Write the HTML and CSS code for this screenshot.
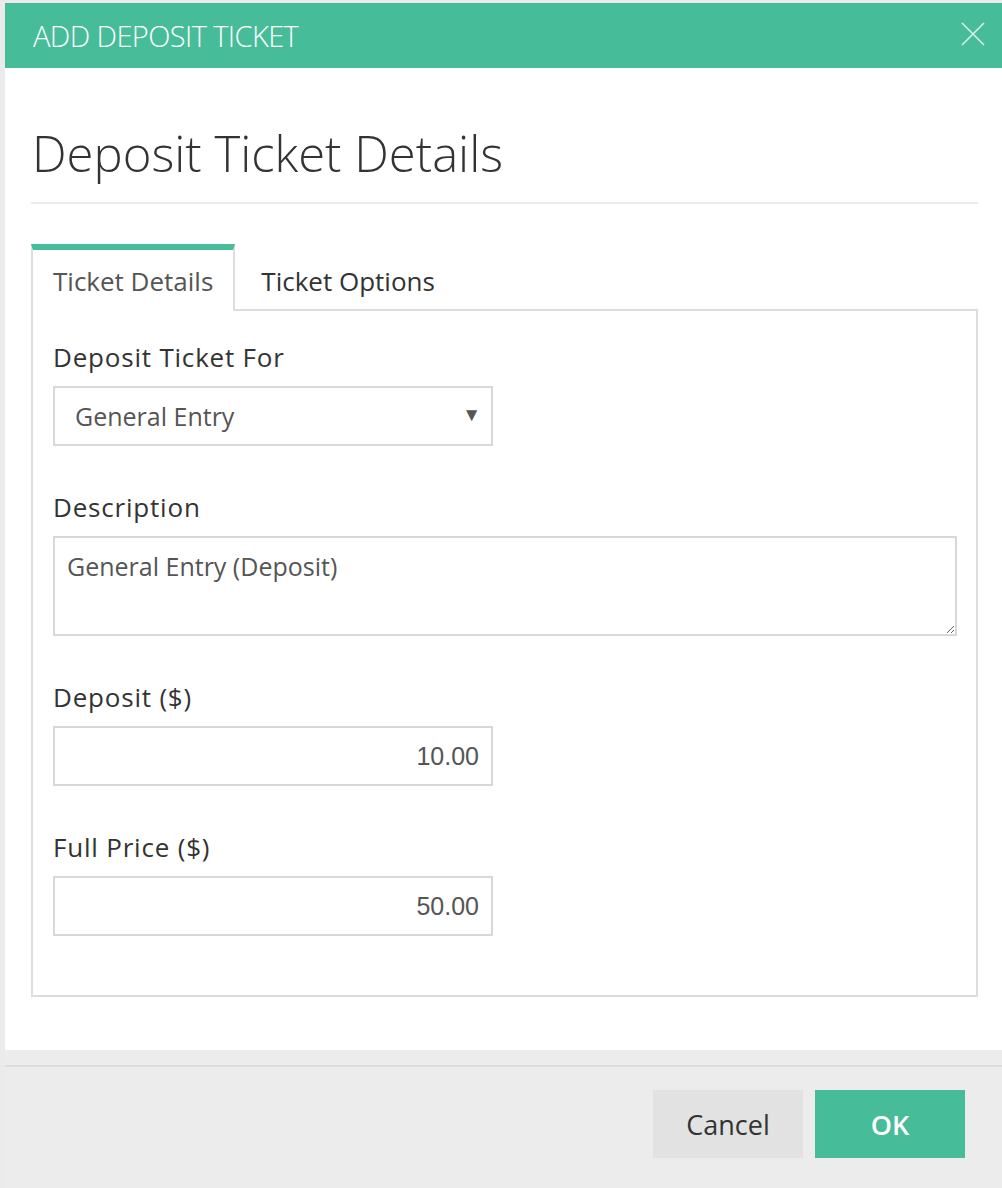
FILE: index.html
```html
<!DOCTYPE html>
<html lang="en">
  <head>
    <meta charset="UTF-8" />
    <meta name="viewport" content="width=device-width, initial-scale=1.0" />
    <title>Add Deposit Ticket</title>
    <link rel="stylesheet" href="styles.css">
  </head>
  <body>
    <div class="dialog">
      <div class="dialog-header">
        <span class="dialog-title">ADD DEPOSIT TICKET</span>
        <svg class="close" width="26" height="26" viewBox="0 0 26 26">
          <path d="M2 2 L24 24 M24 2 L2 24" stroke="#d8f2e9" stroke-width="1.6" fill="none" />
        </svg>
      </div>

      <div class="dialog-body">
        <h1>Deposit Ticket Details</h1>
        <hr />

        <div class="tabs">
          <div class="tab active">Ticket Details</div>
          <div class="tab">Ticket Options</div>
        </div>

        <div class="tab-panel">
          <label for="ticket-for">Deposit Ticket For</label>
          <div class="select-wrap">
            <select id="ticket-for">
              <option>General Entry</option>
            </select>
            <span class="arrow">&#9660;</span>
          </div>

          <label for="description">Description</label>
          <textarea id="description">General Entry (Deposit)</textarea>

          <label for="deposit">Deposit ($)</label>
          <input type="text" id="deposit" class="num" value="10.00" />

          <label for="full-price">Full Price ($)</label>
          <input type="text" id="full-price" class="num" value="50.00" />
        </div>
      </div>

      <div class="dialog-footer">
        <button class="btn btn-cancel">Cancel</button>
        <button class="btn btn-ok">OK</button>
      </div>
    </div>
  </body>
</html>
```

FILE: styles.css
```css
body {
  margin: 0;
  padding: 3px 0 0 5px;
  background-color: #ebebeb;
  font-family: "Open Sans", "Noto Sans", sans-serif;
  color: #333;
}

.dialog {
  background: #ececec;
}

.dialog-header {
  height: 65px;
  background-color: #47bc98;
  display: flex;
  align-items: center;
  justify-content: space-between;
  padding: 0 16px 0 28px;
}

.dialog-title {
  color: #fff;
  font-size: 29px;
  font-weight: 300;
  letter-spacing: -0.6px;
}

.close {
  margin-top: -4px;
}

.dialog-body {
  background: #fff;
  padding: 53px 24px 53px 26px;
}

h1 {
  margin: 0;
  font-size: 49px;
  font-weight: 300;
  line-height: 64px;
  color: #333;
  padding-left: 1px;
}

hr {
  border: none;
  border-top: 2px solid #ebebeb;
  margin: 17px 0 40px;
}

.tabs {
  display: flex;
  align-items: flex-end;
}

.tab {
  font-size: 26px;
  line-height: 32px;
  padding: 21px 20px 14px 26px;
  color: #333;
  margin-bottom: -2px;
}

.tab.active {
  color: #555;
  background: #fff;
  border-top: 6px solid #47bc98;
  border-left: 2px solid #ddd;
  border-right: 2px solid #ddd;
  padding: 15px 20px 14px 20px;
  position: relative;
  z-index: 1;
}

.tab-panel {
  border: 2px solid #ddd;
  padding: 29px 19px 59px 20px;
  display: flex;
  flex-direction: column;
  align-items: flex-start;
}

label {
  font-size: 26px;
  letter-spacing: 0.8px;
  line-height: 34px;
  color: #333;
  margin-bottom: 12px;
}

.select-wrap {
  position: relative;
  margin-bottom: 44px;
}

select {
  width: 440px;
  height: 60px;
  border: 2px solid #d8d8d8;
  background: #fff;
  font-family: inherit;
  font-size: 25px;
  color: #555;
  padding: 0 20px;
  appearance: none;
  border-radius: 0;
}

.arrow {
  position: absolute;
  right: 12px;
  top: 15px;
  font-size: 19px;
  color: #555;
}

textarea {
  box-sizing: border-box;
  width: 904px;
  height: 100px;
  border: 2px solid #d8d8d8;
  font-family: inherit;
  font-size: 25px;
  color: #555;
  padding: 11px 12px;
  margin: 0 0 44px;
  resize: vertical;
}

input.num {
  box-sizing: border-box;
  width: 440px;
  height: 60px;
  border: 2px solid #d8d8d8;
  font-family: "Liberation Sans", Arial, sans-serif;
  font-size: 25px;
  color: #555;
  text-align: right;
  padding: 0 12px;
  margin: 0 0 44px;
}

input.num:last-child {
  margin-bottom: 0;
}

.dialog-footer {
  margin-top: 15px;
  border-top: 2px solid #dcdcdc;
  padding: 23px 37px 30px;
  display: flex;
  justify-content: flex-end;
  gap: 12px;
}

.btn {
  width: 150px;
  height: 68px;
  border: none;
  font-family: "Open Sans", sans-serif;
  font-size: 27px;
  cursor: pointer;
}

.btn-cancel {
  background-color: #e2e2e2;
  color: #333;
}

.btn-ok {
  background-color: #47bc98;
  color: #fff;
  font-weight: 600;
}
```
